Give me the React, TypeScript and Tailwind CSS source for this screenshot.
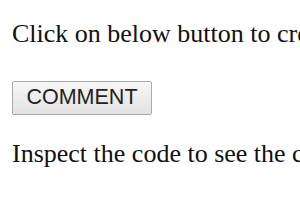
export default function App() {
  return (
    <div className="h-[210px] w-[300px] overflow-hidden bg-white font-['Liberation_Serif',serif] text-[#111]">
      <div className="flex flex-col items-start pl-[12px] pt-[19px]">
        <p className="whitespace-nowrap text-[26px] leading-[30px]">
          Click on below button to create a comment
        </p>
        <button
          type="button"
          className="mt-[32px] flex h-[34px] w-[140px] items-center justify-center rounded-[2px] border-[1.5px] border-[#a9a9a9] bg-gradient-to-b from-[#f6f6f6] to-[#e3e3e3] font-['Liberation_Sans',Arial,sans-serif] text-[21.5px] leading-none text-[#222]"
        >
          COMMENT
        </button>
        <p className="mt-[24px] whitespace-nowrap text-[26px] leading-[30px]">
          Inspect the code to see the comment
        </p>
      </div>
    </div>
  );
}
